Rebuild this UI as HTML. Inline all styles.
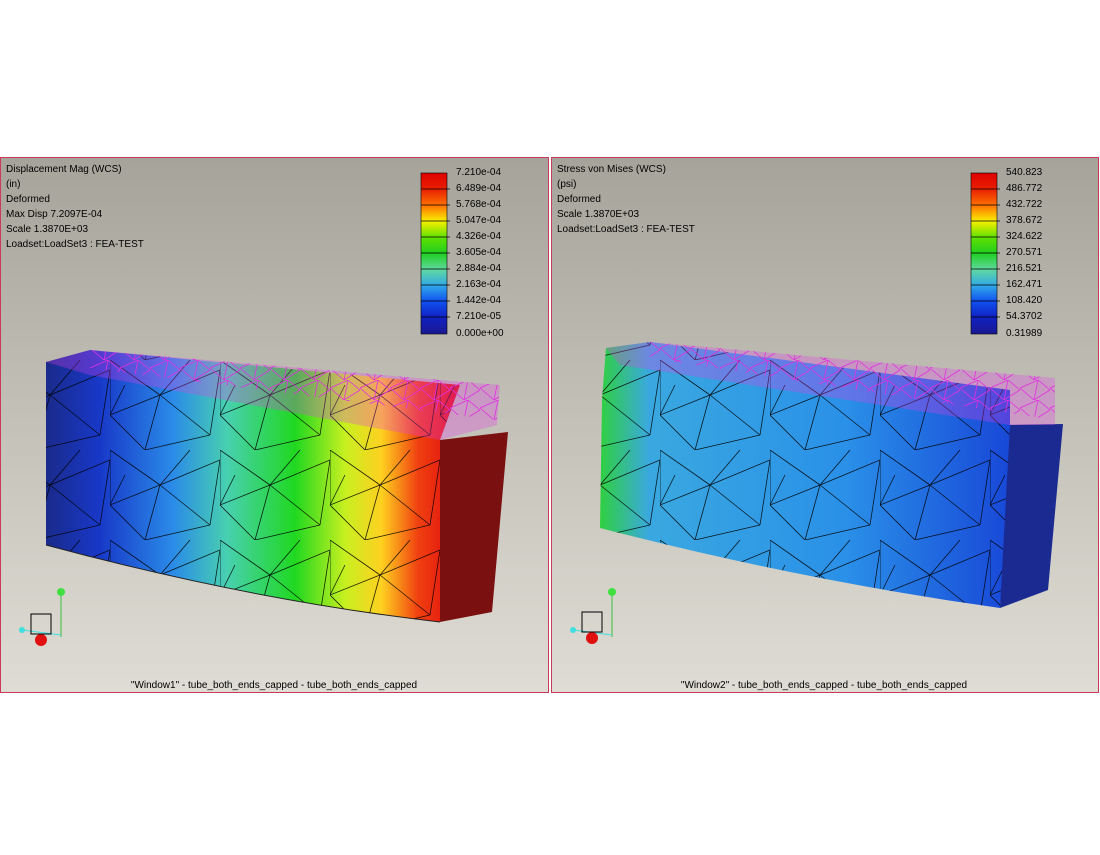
<!DOCTYPE html>
<html><head><meta charset="utf-8"><style>
body{margin:0;background:#fff;width:1100px;height:850px;overflow:hidden;font-family:"Liberation Sans",sans-serif}
</style></head><body>
<svg width="1100" height="850" xmlns="http://www.w3.org/2000/svg" font-family="Liberation Sans, sans-serif" font-size="10">
<defs>
<linearGradient id="bg" x1="0" y1="0" x2="0" y2="1">
<stop offset="0" stop-color="#a6a49a"/><stop offset="0.5" stop-color="#c4c2b8"/><stop offset="1" stop-color="#dedcd4"/></linearGradient>
<linearGradient id="disp" x1="45" y1="0" x2="500" y2="0" gradientUnits="userSpaceOnUse">
<stop offset="0" stop-color="#1a2a8a"/><stop offset="0.12" stop-color="#1838c8"/><stop offset="0.28" stop-color="#2a8ae8"/><stop offset="0.4" stop-color="#48d0b0"/><stop offset="0.55" stop-color="#20d820"/><stop offset="0.66" stop-color="#c8f020"/><stop offset="0.74" stop-color="#ffd020"/><stop offset="0.82" stop-color="#f04010"/><stop offset="0.9" stop-color="#e01010"/><stop offset="1" stop-color="#b00808"/></linearGradient>
<linearGradient id="str" x1="600" y1="0" x2="1010" y2="0" gradientUnits="userSpaceOnUse">
<stop offset="0" stop-color="#30d040"/><stop offset="0.12" stop-color="#3aa8e0"/><stop offset="0.6" stop-color="#2a90e8"/><stop offset="1" stop-color="#1848d8"/></linearGradient>
<linearGradient id="cb" x1="0" y1="0" x2="0" y2="1">
<stop offset="0" stop-color="#e00000"/><stop offset="0.1" stop-color="#e82000"/><stop offset="0.2" stop-color="#ff7000"/><stop offset="0.3" stop-color="#f8f000"/><stop offset="0.4" stop-color="#60e000"/><stop offset="0.5" stop-color="#20d020"/><stop offset="0.6" stop-color="#60d8a0"/><stop offset="0.7" stop-color="#30a8e8"/><stop offset="0.8" stop-color="#1050f0"/><stop offset="0.9" stop-color="#1020c0"/><stop offset="1" stop-color="#1a1a90"/></linearGradient>
<pattern id="mesh" width="110" height="90" patternUnits="userSpaceOnUse">
<path d="M0 0L50 35L110 10M50 35L35 90M50 35L100 75M0 55L50 35M0 55L35 90M110 10L100 75M35 90L100 75M0 0L0 55M50 35L80 0M0 55L15 25" stroke="#000" stroke-width="0.8" fill="none"/></pattern>
<pattern id="mesh2" width="30" height="20" patternUnits="userSpaceOnUse">
<path d="M0 8L18 0L30 10M18 0L14 20M0 8L14 20L30 10" stroke="#e030e0" stroke-width="0.8" fill="none"/></pattern>
</defs>
<rect x="0.5" y="157.5" width="548" height="535" fill="url(#bg)" stroke="#c83c5a"/>
<g fill="#000">
<text x="6" y="172">Displacement Mag (WCS)</text><text x="6" y="187">(in)</text><text x="6" y="202">Deformed</text><text x="6" y="217">Max Disp  7.2097E-04</text><text x="6" y="232">Scale  1.3870E+03</text><text x="6" y="247">Loadset:LoadSet3 :  FEA-TEST</text>
</g>
<rect x="421" y="173" width="26" height="161" fill="url(#cb)" stroke="#000" stroke-width="0.6"/>
<g stroke="#000" stroke-width="0.7"><path d="M421 189H450M421 205H450M421 221H450M421 237H450M421 253H450M421 269H450M421 285H450M421 301H450M421 317H450"/></g>
<g fill="#000"><text x="456" y="175">7.210e-04</text><text x="456" y="191">6.489e-04</text><text x="456" y="207">5.768e-04</text><text x="456" y="223">5.047e-04</text><text x="456" y="239">4.326e-04</text><text x="456" y="255">3.605e-04</text><text x="456" y="271">2.884e-04</text><text x="456" y="287">2.163e-04</text><text x="456" y="303">1.442e-04</text><text x="456" y="319">7.210e-05</text><text x="456" y="336">0.000e+00</text></g>
<polygon points="440,440 508,432 492,612 440,622" fill="#7a1010"/>
<path d="M46,362 L90,350 L460,385 L440,440 L440,622 Q250,600 46,545 Z" fill="url(#disp)"/>
<path d="M46,362 L90,350 L460,385 L440,440 L440,622 Q250,600 46,545 Z" fill="url(#mesh)" opacity="0.85"/>
<polygon points="46,362 90,350 500,385 497,425 440,440 90,375" fill="#e040e8" opacity="0.3"/>
<polygon points="90,350 500,385 497,420 90,368" fill="url(#mesh2)"/>
<path d="M46,545 Q250,600 440,622" stroke="#222" fill="none"/>
<g><line x1="61" y1="592" x2="61" y2="637" stroke="#40c040"/><circle cx="61" cy="592" r="4" fill="#40e040"/><line x1="22" y1="630" x2="61" y2="635" stroke="#40e0e0"/><circle cx="22" cy="630" r="3" fill="#40e0e0"/><circle cx="41" cy="640" r="6" fill="#e01010"/><rect x="31" y="614" width="20" height="20" fill="none" stroke="#000"/></g>
<text x="274" y="688" text-anchor="middle" fill="#000">"Window1" - tube_both_ends_capped - tube_both_ends_capped</text>
<rect x="551.5" y="157.5" width="547" height="535" fill="url(#bg)" stroke="#c83c5a"/>
<g fill="#000">
<text x="557" y="172">Stress von Mises (WCS)</text><text x="557" y="187">(psi)</text><text x="557" y="202">Deformed</text><text x="557" y="217">Scale  1.3870E+03</text><text x="557" y="232">Loadset:LoadSet3 :  FEA-TEST</text>
</g>
<rect x="971" y="173" width="26" height="161" fill="url(#cb)" stroke="#000" stroke-width="0.6"/>
<g stroke="#000" stroke-width="0.7"><path d="M971 189H1000M971 205H1000M971 221H1000M971 237H1000M971 253H1000M971 269H1000M971 285H1000M971 301H1000M971 317H1000"/></g>
<g fill="#000"><text x="1006" y="175">540.823</text><text x="1006" y="191">486.772</text><text x="1006" y="207">432.722</text><text x="1006" y="223">378.672</text><text x="1006" y="239">324.622</text><text x="1006" y="255">270.571</text><text x="1006" y="271">216.521</text><text x="1006" y="287">162.471</text><text x="1006" y="303">108.420</text><text x="1006" y="319">54.3702</text><text x="1006" y="336">0.31989</text></g>
<polygon points="1005,425 1063,424 1048,590 1000,608" fill="#1a2a90"/>
<path d="M606,348 L650,342 L1010,390 L1010,425 L1000,608 Q800,580 600,528 L602,400 Z" fill="url(#str)"/>
<path d="M606,348 L650,342 L1010,390 L1010,425 L1000,608 Q800,580 600,528 L602,400 Z" fill="url(#mesh)" opacity="0.85"/>
<polygon points="606,348 650,342 1055,378 1055,425 1010,425 620,365" fill="#e040e8" opacity="0.3"/>
<polygon points="650,342 1055,378 1055,420 650,358" fill="url(#mesh2)"/>
<g><line x1="612" y1="592" x2="612" y2="637" stroke="#40c040"/><circle cx="612" cy="592" r="4" fill="#40e040"/><line x1="573" y1="630" x2="612" y2="635" stroke="#40e0e0"/><circle cx="573" cy="630" r="3" fill="#40e0e0"/><circle cx="592" cy="638" r="6" fill="#e01010"/><rect x="582" y="612" width="20" height="20" fill="none" stroke="#000"/></g>
<text x="824" y="688" text-anchor="middle" fill="#000">"Window2" - tube_both_ends_capped - tube_both_ends_capped</text>
</svg>
</body></html>
